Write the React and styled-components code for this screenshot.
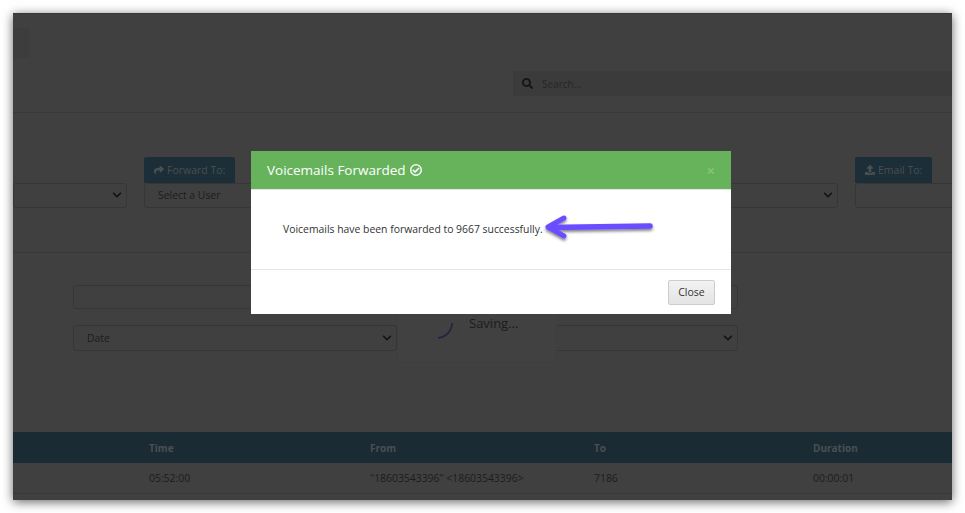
import React from "react";
import styled, { createGlobalStyle } from "styled-components";
import { FaChevronDown, FaRegCheckCircle, FaSearch, FaShare, FaUpload } from "react-icons/fa";

const GlobalStyle = createGlobalStyle`
  html, body {
    margin: 0;
    background: #fff;
    font-family: "Open Sans", "Liberation Sans", sans-serif;
  }
`;

const Frame = styled.div`
  padding: 13px;
  height: 513px;
  box-sizing: border-box;
`;

const Window = styled.div`
  width: 939px;
  height: 487px;
  background: #404040;
  border-top: 1px solid #383838;
  box-sizing: border-box;
  box-shadow: 0 2px 10px rgba(0, 0, 0, 0.6);
`;

const Clip = styled.div`
  position: relative;
  height: 100%;
  overflow: hidden;
`;

const TopBar = styled.div`
  height: 99px;
  box-sizing: border-box;
  border-bottom: 1px solid #393939;
  padding-top: 14px;
`;

const Tab = styled.div`
  width: 17px;
  height: 30px;
  background: #3d3d3d;
  border-radius: 0 2px 2px 0;
`;

const SearchBar = styled.div`
  display: flex;
  align-items: center;
  gap: 9px;
  margin: 13px 0 0 500px;
  height: 25px;
  padding-left: 9px;
  background: #3b3b3b;
  font-size: 10px;
  color: #262626;
  svg {
    font-size: 11px;
    color: #141414;
  }
`;

const ActionRow = styled.div`
  display: flex;
  gap: 17px;
  height: 140px;
  box-sizing: border-box;
  border-bottom: 1px solid #393939;
  padding-top: 44px;
`;

const ActionColumn = styled.div`
  flex: 0 0 ${(p) => p.$width}px;
  display: flex;
  flex-direction: column;
  align-items: flex-start;
`;

const Label = styled.div`
  display: flex;
  align-items: center;
  gap: 3px;
  height: 26px;
  padding: 0 10px;
  background: #1c2e37;
  border-radius: 2px 2px 0 0;
  font-size: 10.5px;
  color: #4a4f52;
  white-space: nowrap;
  visibility: ${(p) => (p.$empty ? "hidden" : "visible")};
  svg {
    font-size: 10px;
  }
`;

const Field = styled.div`
  display: flex;
  align-items: center;
  justify-content: space-between;
  box-sizing: border-box;
  width: 100%;
  height: ${(p) => p.$height || 25}px;
  padding: 0 4px 1px 13px;
  border: 1px solid #363636;
  border-radius: 3px;
  font-size: 10.4px;
  color: #1c1c1c;
  svg {
    font-size: 10px;
    color: #141414;
  }
`;

const FilterGrid = styled.div`
  display: grid;
  grid-template-columns: 324px 324px;
  align-content: start;
  column-gap: 17px;
  row-gap: 16px;
  padding: 32px 0 0 60px;
  height: 179px;
  box-sizing: border-box;
`;

const TableHead = styled.div`
  display: grid;
  grid-template-columns: 136px 221px 224px 219px 1fr;
  align-items: center;
  height: 31px;
  background: #1a2b33;
  font-size: 10px;
  font-weight: 700;
  color: #4a4f52;
`;

const TableRow = styled.div`
  display: grid;
  grid-template-columns: 136px 221px 224px 219px 1fr;
  align-items: center;
  height: 30px;
  border-bottom: 1px solid #393939;
  font-size: 10.4px;
  color: #1c1c1c;
`;

const SavingBox = styled.div`
  position: absolute;
  left: 384px;
  top: 250px;
  width: 160px;
  height: 99px;
  background: #414141;
  border: 1px solid #3e3e3e;
  box-sizing: border-box;
`;

const SavingText = styled.div`
  position: absolute;
  left: 71px;
  top: 49px;
  font-size: 13px;
  color: #1c1c1c;
`;

const Spinner = styled.svg`
  position: absolute;
  left: 38px;
  top: 56px;
`;

const Modal = styled.div`
  position: absolute;
  left: 238px;
  top: 137px;
  width: 480px;
  height: 163px;
  background: #fff;
  display: flex;
  flex-direction: column;
`;

const ModalHeader = styled.div`
  display: flex;
  align-items: center;
  justify-content: space-between;
  height: 39px;
  box-sizing: border-box;
  padding: 0 16px;
  background: #66b35c;
  border-bottom: 1px solid #e5e5e5;
  font-size: 13.5px;
  font-weight: 500;
  color: #fff;
`;

const ModalTitle = styled.div`
  display: flex;
  align-items: center;
  gap: 4px;
  svg {
    font-size: 12px;
    stroke: currentColor;
    stroke-width: 14;
  }
`;

const CloseMark = styled.span`
  font-size: 15px;
  font-weight: 700;
  color: #85c17d;
  line-height: 1;
`;

const ModalBody = styled.div`
  position: relative;
  height: 80px;
  box-sizing: border-box;
  padding: 32px 32px 0;
  border-bottom: 1px solid #e5e5e5;
  font-size: 10.4px;
  color: #333;
`;

const Arrow = styled.svg`
  position: absolute;
  left: 290px;
  top: 23px;
  overflow: visible;
`;

const ModalFooter = styled.div`
  flex: 1;
  display: flex;
  align-items: center;
  justify-content: flex-end;
  padding: 0 16px;
`;

const CloseButton = styled.button`
  width: 47px;
  height: 25px;
  padding: 0;
  background: linear-gradient(#f2f2f2, #e4e4e4);
  border: 1px solid #ccc;
  border-radius: 2px;
  font-family: inherit;
  font-size: 10.5px;
  color: #333;
`;

export default function App() {
  return (
    <Frame>
      <GlobalStyle />
      <Window>
        <Clip>
          <TopBar>
            <Tab />
            <SearchBar>
              <FaSearch />
              Search...
            </SearchBar>
          </TopBar>

          <ActionRow>
            <ActionColumn $width={114}>
              <Label $empty>Move To:</Label>
              <Field>
                <span />
                <FaChevronDown />
              </Field>
            </ActionColumn>
            <ActionColumn $width={347}>
              <Label>
                <FaShare /> Forward To:
              </Label>
              <Field>Select a User</Field>
            </ActionColumn>
            <ActionColumn $width={330}>
              <Label $empty>Copy To:</Label>
              <Field>
                <span />
                <FaChevronDown />
              </Field>
            </ActionColumn>
            <ActionColumn $width={120}>
              <Label>
                <FaUpload /> Email To:
              </Label>
              <Field />
            </ActionColumn>
          </ActionRow>

          <FilterGrid>
            <Field $height={24} />
            <Field $height={24} />
            <Field $height={26}>
              Date
              <FaChevronDown />
            </Field>
            <Field $height={26}>
              <span />
              <FaChevronDown />
            </Field>
          </FilterGrid>

          <TableHead>
            <span />
            <span>Time</span>
            <span>From</span>
            <span>To</span>
            <span>Duration</span>
          </TableHead>
          <TableRow>
            <span />
            <span>05:52:00</span>
            <span>"18603543396" &lt;18603543396&gt;</span>
            <span>7186</span>
            <span>00:00:01</span>
          </TableRow>

          <SavingBox>
            <Spinner width="18" height="20" viewBox="0 0 18 20">
              <path d="M16 2 C16 10 10 16 2 17" fill="none" stroke="#23233f" strokeWidth="1.6" />
            </Spinner>
            <SavingText>Saving...</SavingText>
          </SavingBox>

          <Modal>
            <ModalHeader>
              <ModalTitle>
                Voicemails Forwarded <FaRegCheckCircle />
              </ModalTitle>
              <CloseMark>×</CloseMark>
            </ModalHeader>
            <ModalBody>
              Voicemails have been forwarded to 9667 successfully.
              <Arrow width="110" height="24" viewBox="0 0 110 24">
                <defs>
                  <filter id="arrowShadow" x="-10%" y="-50%" width="120%" height="220%">
                    <feDropShadow dx="0" dy="2" stdDeviation="1.6" floodColor="#000" floodOpacity="0.5" />
                  </filter>
                </defs>
                <g filter="url(#arrowShadow)" fill="none" stroke="#6a4dff" strokeLinecap="round" strokeLinejoin="round">
                  <path d="M8 14.5 L109 13" strokeWidth="5.5" />
                  <path d="M23 5 L7 14 L23 23" strokeWidth="5" />
                </g>
              </Arrow>
            </ModalBody>
            <ModalFooter>
              <CloseButton>Close</CloseButton>
            </ModalFooter>
          </Modal>
        </Clip>
      </Window>
    </Frame>
  );
}
